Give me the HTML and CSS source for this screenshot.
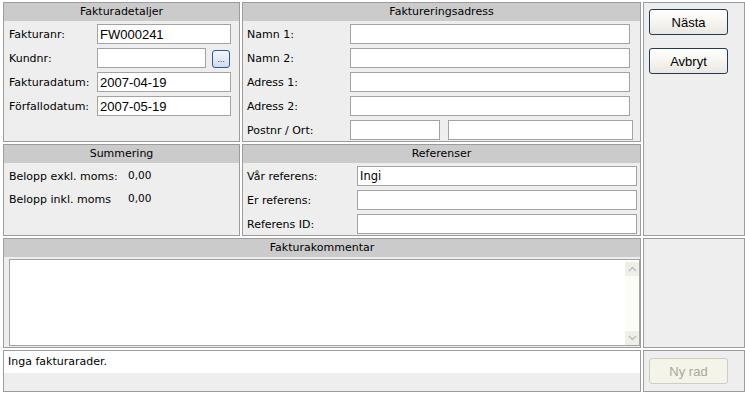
FILE: index.html
```html
<!DOCTYPE html>
<html lang="sv">
<head>
<meta charset="utf-8">
<title>Faktura</title>
<link rel="stylesheet" href="styles.css">
</head>
<body>
<div class="form">
  <section class="panel p-detaljer">
    <div class="ph">Fakturadetaljer</div>
    <div class="pb">
      <div class="row"><span class="lbl">Fakturanr:</span><input class="in w134" type="text" value="FW000241"></div>
      <div class="row"><span class="lbl">Kundnr:</span><input class="in w109" type="text" value=""><button class="dots" type="button">...</button></div>
      <div class="row"><span class="lbl">Fakturadatum:</span><input class="in w134" type="text" value="2007-04-19"></div>
      <div class="row"><span class="lbl">Förfallodatum:</span><input class="in w134" type="text" value="2007-05-19"></div>
    </div>
  </section>

  <section class="panel p-adress">
    <div class="ph">Faktureringsadress</div>
    <div class="pb">
      <div class="row"><span class="lbl">Namn 1:</span><input class="in w280" type="text"></div>
      <div class="row"><span class="lbl">Namn 2:</span><input class="in w280" type="text"></div>
      <div class="row"><span class="lbl">Adress 1:</span><input class="in w280" type="text"></div>
      <div class="row"><span class="lbl">Adress 2:</span><input class="in w280" type="text"></div>
      <div class="row"><span class="lbl">Postnr / Ort:</span><input class="in w90" type="text"><input class="in w185" type="text"></div>
    </div>
  </section>

  <section class="panel p-actions">
    <button class="btn" type="button">Nästa</button>
    <button class="btn" type="button">Avbryt</button>
  </section>

  <section class="panel p-summering">
    <div class="ph">Summering</div>
    <div class="pb">
      <div class="srow"><span class="lbl">Belopp exkl. moms:</span><span class="val">0,00</span></div>
      <div class="srow"><span class="lbl">Belopp inkl. moms</span><span class="val">0,00</span></div>
    </div>
  </section>

  <section class="panel p-ref">
    <div class="ph">Referenser</div>
    <div class="pb">
      <div class="row"><span class="lbl">Vår referens:</span><input class="in w280 tah" type="text" value="Ingi"></div>
      <div class="row"><span class="lbl">Er referens:</span><input class="in w280" type="text"></div>
      <div class="row"><span class="lbl">Referens ID:</span><input class="in w280" type="text"></div>
    </div>
  </section>

  <section class="panel p-komm">
    <div class="ph">Fakturakommentar</div>
    <div class="ta">
      <textarea class="ta-field"></textarea>
      <div class="sb">
        <span class="sb-btn"><svg width="9" height="6" viewBox="0 0 9 6"><path d="M1 5 L4.5 1.5 L8 5" fill="none" stroke="#bdbdb5" stroke-width="1.4"/></svg></span>
        <span class="sb-track"></span>
        <span class="sb-btn"><svg width="9" height="6" viewBox="0 0 9 6"><path d="M1 1 L4.5 4.5 L8 1" fill="none" stroke="#bdbdb5" stroke-width="1.4"/></svg></span>
      </div>
    </div>
  </section>

  <section class="panel p-empty"></section>

  <section class="panel p-rader">
    <div class="rader-line">Inga fakturarader.</div>
  </section>

  <section class="panel p-nyrad">
    <button class="btn disabled" type="button" disabled>Ny rad</button>
  </section>
</div>
</body>
</html>
```

FILE: styles.css
```css
html, body {
  margin: 0;
  padding: 0;
  background: #ffffff;
}

body {
  font-family: "DejaVu Sans", Verdana, sans-serif;
  font-size: 11px;
  color: #000;
}

.form {
  display: grid;
  grid-template-columns: 237px 399px 102px;
  grid-template-rows: 140px 92px 110px 42px;
  gap: 2px;
  padding: 2px 0 0 3px;
}

.panel {
  box-sizing: border-box;
  border: 1px solid #9c9c9c;
  background: #eeeeee;
  overflow: hidden;
}

.p-detaljer { grid-column: 1; grid-row: 1; }
.p-adress { grid-column: 2; grid-row: 1; }
.p-actions { grid-column: 3; grid-row: 1 / span 2; }
.p-summering { grid-column: 1; grid-row: 2; }
.p-ref { grid-column: 2; grid-row: 2; }
.p-komm { grid-column: 1 / span 2; grid-row: 3; }
.p-empty { grid-column: 3; grid-row: 3; }
.p-rader { grid-column: 1 / span 2; grid-row: 4; }
.p-nyrad { grid-column: 3; grid-row: 4; }

.ph {
  height: 18px;
  line-height: 18px;
  background: #cbcbcb;
  text-align: center;
  font-size: 11px;
}

.pb {
  padding-top: 1px;
}

.row {
  display: flex;
  align-items: center;
  height: 24px;
}

.p-detaljer .row { padding-left: 5px; }
.p-detaljer .lbl { width: 88px; }
.p-adress .row { padding-left: 4px; }
.p-adress .lbl { width: 103px; }
.p-ref .row { padding-left: 4px; }
.p-ref .lbl { width: 110px; }

.lbl {
  flex: none;
  white-space: nowrap;
}

.in {
  flex: none;
  box-sizing: border-box;
  height: 20px;
  margin: 0;
  padding: 0 2px;
  border: 1px solid #a3a3a3;
  background: #ffffff;
  font-family: "Liberation Sans", Arial, sans-serif;
  font-size: 13px;
  color: #000;
  outline: none;
}

.in.tah {
  font-family: "DejaVu Sans", Verdana, sans-serif;
  font-size: 11.5px;
}

.w134 { width: 134px; }
.w109 { width: 109px; }
.w280 { width: 280px; }
.w90 { width: 90px; margin-right: 8px; }
.w185 { width: 185px; }

.dots {
  flex: none;
  box-sizing: border-box;
  width: 18px;
  height: 18px;
  margin: 1px 0 0 6px;
  padding: 0 0 3px;
  border: 1px solid #2a5a9a;
  border-radius: 3px;
  background: linear-gradient(#f4f7fc, #d3dcea);
  font-family: "Liberation Sans", Arial, sans-serif;
  font-size: 9px;
  line-height: 1;
  color: #1d3f73;
  display: flex;
  align-items: flex-end;
  justify-content: center;
}

.p-actions {
  display: flex;
  flex-direction: column;
  align-items: flex-start;
  gap: 13px;
  padding: 6px 0 0 5px;
}

.p-nyrad {
  padding: 6px 0 0 5px;
}

.btn {
  box-sizing: border-box;
  width: 79px;
  height: 26px;
  margin: 0;
  padding: 0;
  border: 1px solid #1f3b57;
  border-radius: 3px;
  background: linear-gradient(#ffffff 0%, #f7f6f1 45%, #e8e7e0 100%);
  font-family: "Liberation Sans", Arial, sans-serif;
  font-size: 13px;
  color: #000;
}

.btn.disabled {
  border-color: #cfcdc0;
  background: #f5f4ea;
  color: #aca899;
}

.p-nyrad .btn { margin-top: 1px; }

.p-summering .pb {
  padding-top: 2px;
}

.srow {
  display: flex;
  align-items: center;
  height: 23px;
  padding-left: 5px;
}

.p-summering .lbl { width: 119px; }

.val {
  margin-bottom: 4px;
  font-size: 10.5px;
}

.ta {
  box-sizing: border-box;
  display: flex;
  width: 631px;
  height: 87px;
  margin: 2px 0 0 5px;
  border: 1px solid #a3a3a3;
  background: #ffffff;
}

.ta-field {
  flex: 1;
  margin: 0;
  padding: 2px;
  border: none;
  resize: none;
  outline: none;
  background: #ffffff;
  font-family: "Liberation Sans", Arial, sans-serif;
  font-size: 13px;
}

.sb {
  flex: none;
  width: 14px;
  display: flex;
  flex-direction: column;
  background: #fdfdf7;
  padding: 2px 0 0;
  box-sizing: border-box;
}

.sb-btn {
  flex: none;
  height: 14px;
  display: flex;
  align-items: center;
  justify-content: center;
  background: #efefe8;
}

.sb-track {
  flex: 1;
}

.rader-line {
  height: 22px;
  line-height: 22px;
  padding-left: 4px;
  background: #ffffff;
}
```
